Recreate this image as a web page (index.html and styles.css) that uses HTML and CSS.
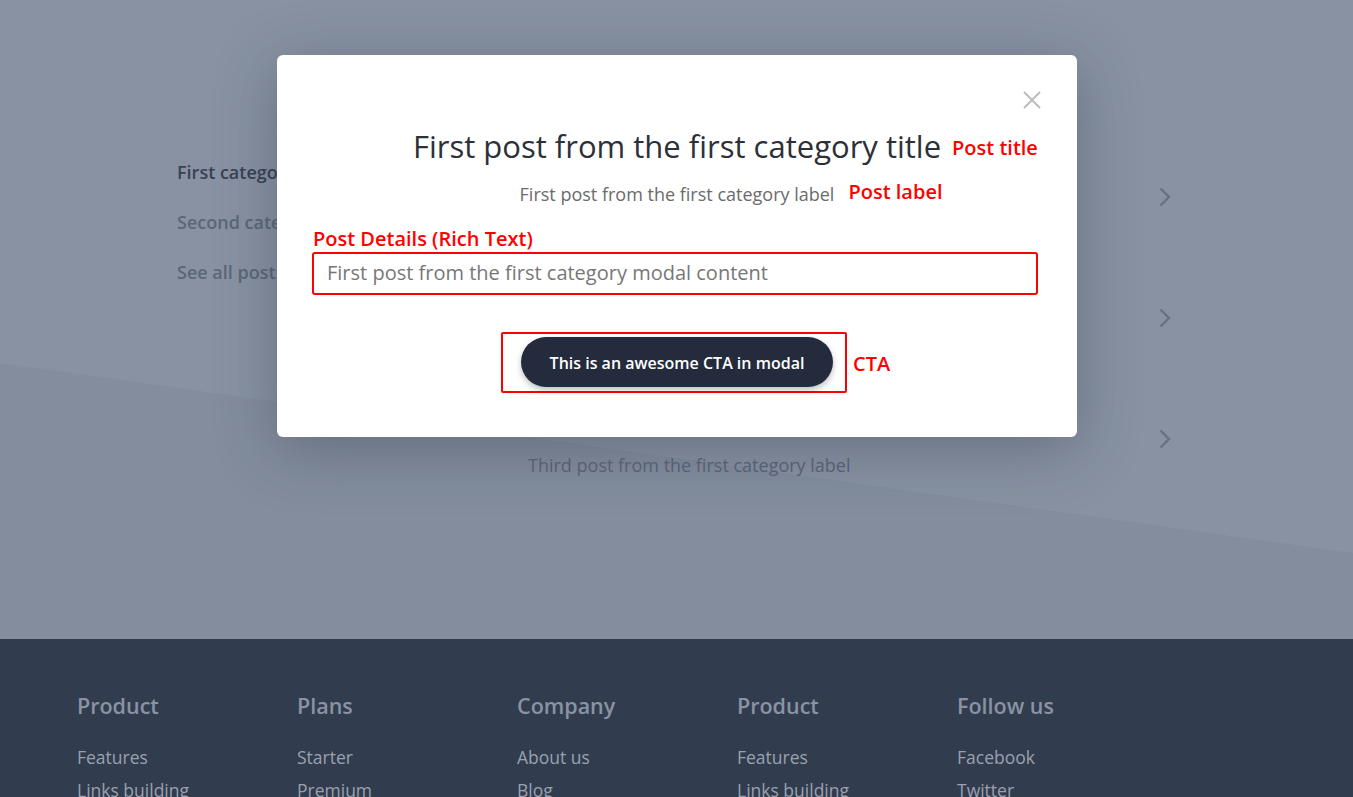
FILE: index.html
```html
<!DOCTYPE html>
<html lang="en">
<head>
<meta charset="utf-8">
<title>Posts</title>
<link rel="stylesheet" href="styles.css">
</head>
<body>
<div class="page">
  <main class="main">
    <div class="content">
      <nav class="sidebar">
        <a class="side-link active">First category</a>
        <a class="side-link">Second category</a>
        <a class="side-link">See all posts</a>
      </nav>
      <ul class="posts">
        <li class="post">
          <div class="post-text"><p class="post-label">First post from the first category label</p></div>
          <svg class="chev" viewBox="0 0 12 20" width="12" height="20"><path d="M1.5 1.5 L10 10 L1.5 18.5" fill="none" stroke="currentColor" stroke-width="2.4"/></svg>
        </li>
        <li class="post">
          <div class="post-text"><p class="post-label">Second post from the first category label</p></div>
          <svg class="chev" viewBox="0 0 12 20" width="12" height="20"><path d="M1.5 1.5 L10 10 L1.5 18.5" fill="none" stroke="currentColor" stroke-width="2.4"/></svg>
        </li>
        <li class="post">
          <div class="post-text"><p class="post-label">Third post from the first category label</p></div>
          <svg class="chev" viewBox="0 0 12 20" width="12" height="20"><path d="M1.5 1.5 L10 10 L1.5 18.5" fill="none" stroke="currentColor" stroke-width="2.4"/></svg>
        </li>
      </ul>
    </div>
  </main>

  <footer class="footer">
    <div class="fcol">
      <h4 class="fhead">Product</h4>
      <a class="flink">Features</a>
      <a class="flink">Links building</a>
    </div>
    <div class="fcol">
      <h4 class="fhead">Plans</h4>
      <a class="flink">Starter</a>
      <a class="flink">Premium</a>
    </div>
    <div class="fcol">
      <h4 class="fhead">Company</h4>
      <a class="flink">About us</a>
      <a class="flink">Blog</a>
    </div>
    <div class="fcol">
      <h4 class="fhead">Product</h4>
      <a class="flink">Features</a>
      <a class="flink">Links building</a>
    </div>
    <div class="fcol">
      <h4 class="fhead">Follow us</h4>
      <a class="flink">Facebook</a>
      <a class="flink">Twitter</a>
    </div>
  </footer>

  <div class="modal">
    <div class="modal-top">
      <button class="close" aria-label="Close">
        <svg viewBox="0 0 18 18" width="18" height="18"><path d="M1 1 L17 17 M17 1 L1 17" stroke="currentColor" stroke-width="2" fill="none"/></svg>
      </button>
    </div>
    <div class="center-row title-row">
      <div class="annotated">
        <h2 class="modal-title">First post from the first category title</h2>
        <span class="note note-title">Post title</span>
      </div>
    </div>
    <div class="center-row label-row">
      <div class="annotated">
        <p class="modal-label">First post from the first category label</p>
        <span class="note note-label">Post label</span>
      </div>
    </div>
    <div class="details">
      <span class="note-block">Post Details (Rich Text)</span>
      <div class="rich">First post from the first category modal content</div>
    </div>
    <div class="center-row cta-row">
      <div class="annotated cta-wrap">
        <button class="cta">This is an awesome CTA in modal</button>
        <span class="note note-cta">CTA</span>
      </div>
    </div>
  </div>
</div>
</body>
</html>
```
FILE: styles.css
```css
* { box-sizing: border-box; }
html, body { margin: 0; padding: 0; }
body {
  font-family: "Open Sans", "Lato", sans-serif;
  width: 1353px;
  height: 797px;
  overflow: hidden;
}
.page { position: relative; }

.main {
  height: 639px;
  background: linear-gradient(188deg, #8892a2 0%, #8892a2 66.7%, #838d9e 66.7%, #838d9e 100%);
  padding-top: 162px;
}
.content {
  display: flex;
  padding: 0 176px 0 177px;
}
.sidebar {
  width: 180px;
  display: flex;
  flex-direction: column;
  gap: 29px;
}
.side-link {
  font-size: 18px;
  line-height: 21px;
  color: #5d6677;
  font-weight: 600;
  white-space: nowrap;
}
.side-link.active { color: #394255; }

.posts {
  list-style: none;
  margin: 0;
  padding: 0;
  flex: 1;
  margin-top: -26px;
}
.post {
  height: 121px;
  display: flex;
  align-items: center;
  justify-content: space-between;
  position: relative;
}
.post-text { padding-left: 171px; padding-top: 52px; }
.post-label {
  margin: 0;
  font-size: 18px;
  line-height: 22px;
  color: #5c6577;
}
.chev { color: #677183; margin-right: 6px; }

.footer {
  height: 158px;
  background: #323c4f;
  display: flex;
  padding: 54px 0 0 77px;
}
.fcol {
  width: 220px;
  display: flex;
  flex-direction: column;
}
.fhead {
  margin: 0 0 22px;
  font-size: 21.5px;
  line-height: 26px;
  font-weight: 600;
  color: #8a93a3;
}
.flink {
  font-size: 17.5px;
  line-height: 33px;
  color: #9aa1ae;
  font-weight: 400;
  white-space: nowrap;
}

.modal {
  position: absolute;
  left: 277px;
  top: 55px;
  width: 800px;
  height: 382px;
  background: #fff;
  border-radius: 6px;
  box-shadow: 0 12px 60px rgba(40, 48, 66, 0.35);
  padding: 0 39px 0 35px;
}
.modal-top {
  display: flex;
  justify-content: flex-end;
  padding-top: 36px;
  margin-right: -3px;
  height: 54px;
}
.close {
  border: 0;
  background: none;
  padding: 0;
  width: 18px;
  height: 18px;
  color: #bcbcbc;
  display: block;
}
.close svg { display: block; }
.center-row {
  display: flex;
  justify-content: center;
  margin-left: 4px;
}
.annotated { position: relative; }
.modal-title {
  margin: 0;
  font-size: 31px;
  line-height: 40px;
  font-weight: 500;
  color: #2d3039;
  white-space: nowrap;
}
.note {
  position: absolute;
  top: 50%;
  transform: translateY(-50%);
  white-space: nowrap;
  color: #ff0000;
  font-weight: 600;
  font-size: 20px;
}
.note-title { left: calc(100% + 11px); margin-top: 1px; }
.title-row { margin-top: 17px; }
.label-row { margin-top: 16px; }
.modal-label {
  margin: 0;
  font-size: 18px;
  line-height: 24px;
  color: #6b6b6b;
}
.note-label { left: calc(100% + 14px); margin-top: -3px; }
.details { margin-top: 22px; }
.note-block {
  display: block;
  color: #ff0000;
  font-weight: 600;
  font-size: 20px;
  line-height: 22px;
  margin-left: 1px;
}
.rich {
  margin-top: 2px;
  height: 43px;
  border: 2px solid #ff0000;
  border-radius: 3px;
  padding: 0 13px;
  font-size: 20px;
  line-height: 37px;
  color: #777;
}
.cta-row { margin-top: 42px; }
.cta-wrap::before {
  content: "";
  position: absolute;
  left: -20px;
  right: -14px;
  top: -5px;
  bottom: -6px;
  border: 2px solid #ff0000;
  border-radius: 2px;
}
.cta {
  position: relative;
  border: 0;
  width: 312px;
  height: 50px;
  border-radius: 25px;
  background: #232b3d;
  color: #fff;
  font-family: inherit;
  font-size: 16px;
  font-weight: 600;
  padding-top: 3px;
  box-shadow: 0 3px 6px rgba(0, 0, 0, 0.25);
  display: block;
}
.note-cta { left: calc(100% + 20px); margin-top: 1px; }
```
